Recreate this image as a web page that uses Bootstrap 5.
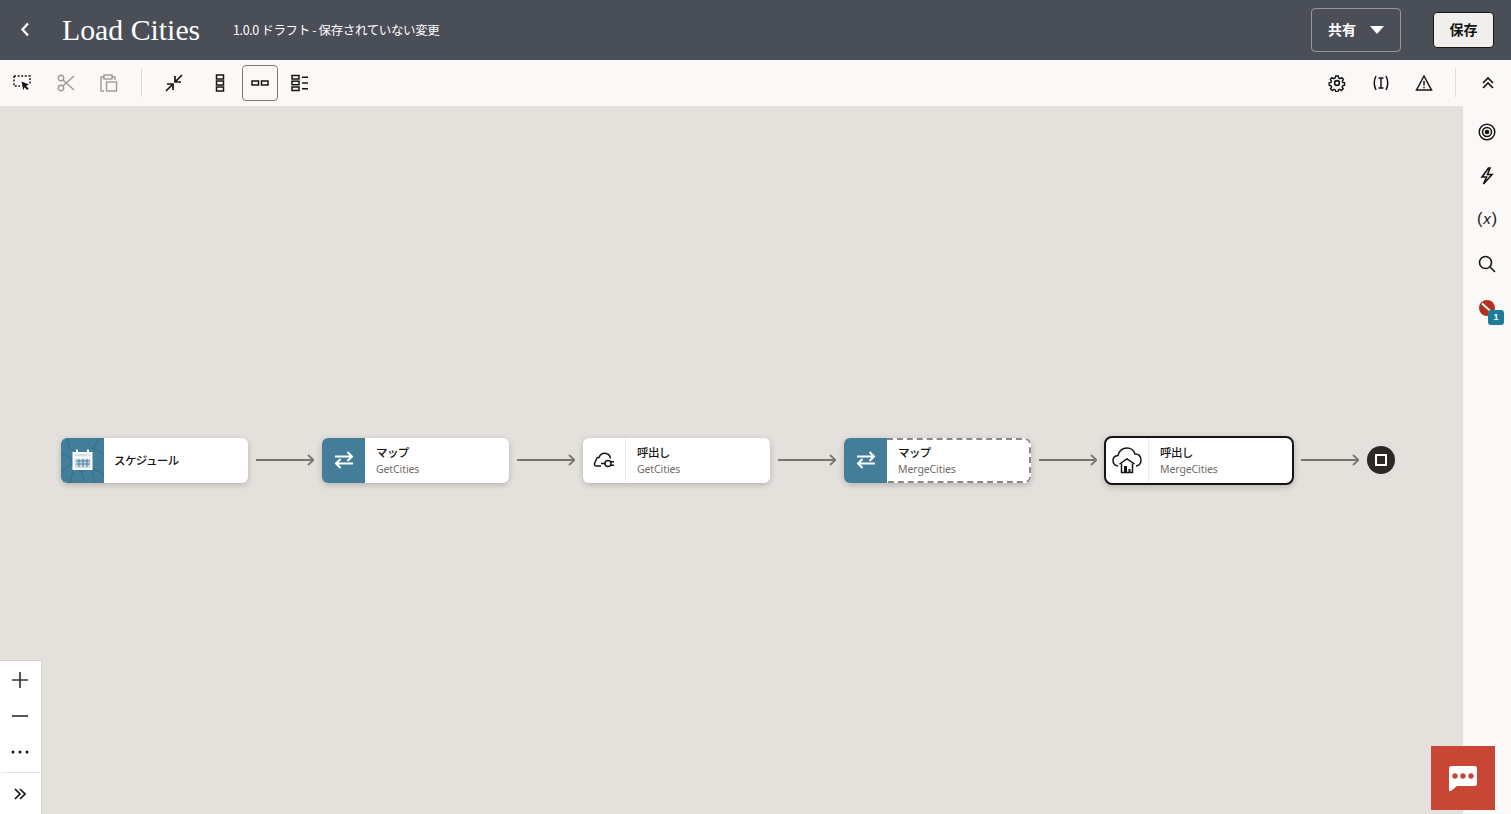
<!DOCTYPE html>
<html lang="ja">
<head>
<meta charset="utf-8">
<title>Load Cities</title>
<link href="https://cdn.jsdelivr.net/npm/bootstrap@5.3.0/dist/css/bootstrap.min.css" rel="stylesheet">
<style>
html,body{height:100%;overflow:hidden}
body{font-family:"Noto Sans CJK JP","Noto Sans",sans-serif;background:#e4e1dc;color:#161513}
.app-shell{height:814px;position:relative}
.head-bar{height:60px;background:#4a4e57;color:#fff;flex:none;padding:0 17px 0 0}
.back-btn{width:50px;height:60px;margin-right:12px;flex:none}
.page-title{font-family:"Liberation Serif",serif;font-size:29.8px;font-weight:400;line-height:1;margin:0 32px 0 0;width:139px;white-space:nowrap}
.page-sub{font-size:12.5px;letter-spacing:-.38px;line-height:1}
.share-btn{width:90px;height:44px;border:1px solid rgba(255,255,255,.42);border-radius:4px;color:#fff;font-size:14px;font-weight:700;background:transparent;margin-right:32px;padding:0 0 2px 16px;gap:14px}
.share-btn svg{margin-top:2px}
.share-btn:hover{color:#fff}
.save-btn{width:61px;height:36px;border:1px solid #161513;border-radius:4px;background:#f1efed;color:#161513;font-size:14px;font-weight:700;padding:0 0 2px}
.tool-bar{height:46px;background:#fbf9f8;flex:none;padding:0 5px 1px 4px}
.tool-btn{width:36px;height:36px;flex:none;border:1px solid transparent;border-radius:4px;background:none;padding:0}
.tool-btn.on{border-color:#7d7a76}
.tool-gap{gap:7.5px}
.tool-sep{width:1px;height:29px;background:#e0ddd8;margin:0 14px 0 14px;flex:none}
.tool-sep-r{margin:0 6.500px 0 5.500px}
.gap-wide{margin-right:6px}
.work-area{min-height:0}
.flow-canvas{background:#e4e1dc;padding-left:61px}
.flow-node{width:187px;height:45px;background:#fff;border-radius:6px;box-shadow:0 2px 6px rgba(0,0,0,.2);flex:none;overflow:hidden}
.node-pane{width:43px;flex:none;height:100%}
.pane-teal{background:#447d98}
.pane-plain{border-right:1px solid #eeece9}
.node-text{padding:1px 0 0 11px;line-height:1;min-width:0}
.node-solo{padding:0 0 0 10px}
.node-label{font-size:11.500px;font-weight:500;color:#161513;line-height:16px;letter-spacing:-.6px}
.node-sub{font-family:"Noto Sans",sans-serif;font-size:10.500px;color:#6f6b66;line-height:16px;letter-spacing:-.1px;margin-top:1px}
.node-dashed{flex:1;height:100%;border:2px dashed #8c8882;border-left:0;border-radius:0 6px 6px 0;padding:1px 0 0 11px}
.node-selected{width:190px;height:49px;border:2px solid #161513;border-radius:8px;margin:0 -1px}
.flow-arrow{width:58px;margin:0 8px;flex:none}
.flow-stop{width:28px;height:28px;border-radius:50%;background:#2b2825;flex:none}
.stop-mark{width:12px;height:12px;border:2px solid #fff}
.side-rail{width:48px;background:#fbf9f8;flex:none;padding-top:4px}
.rail-item{width:48px;height:44px;flex:none;position:relative}
.rail-var{font-family:"Liberation Sans",sans-serif;font-size:16px;line-height:1;color:#161513;padding-bottom:3px}
.rail-var i{font-size:15px;padding:0 1px}
.rail-badge{position:absolute;left:25px;top:24px;width:16px;height:15px;border-radius:3px;background:#1c7c99;color:#fff;font-size:9px;font-weight:700;font-family:"Liberation Sans",sans-serif;line-height:15px;text-align:center}
.zoom-panel{position:absolute;left:0;bottom:0;width:42px;height:154px;background:#fff;border:1px solid #d6d3ce;border-left:0;border-bottom:0;padding:1px 1px 0 0}
.zoom-item{height:36px;width:100%}
.zoom-sep{height:1px;background:#e6e4e0;margin:2px 0 0 1px}
.zoom-last{height:41px}
.chat-btn{position:absolute;left:1431px;top:746px;width:64px;height:64px;background:#c74634;border:0;border-radius:0;padding:0}
</style>
</head>
<body>
<div class="app-shell d-flex flex-column">
  <header class="head-bar d-flex align-items-center">
    <div class="back-btn d-flex align-items-center justify-content-center">
      <svg width="12" height="16" viewBox="0 0 12 16"><path d="M9 1.500 3.500 7.500 9 13.500" fill="none" stroke="#fff" stroke-width="2.400"/></svg>
    </div>
    <h1 class="page-title">Load Cities</h1>
    <span class="page-sub">1.0.0 ドラフト - 保存されていない変更</span>
    <div class="ms-auto d-flex align-items-center">
      <button class="btn share-btn d-flex align-items-center" type="button">共有
        <svg width="14" height="8" viewBox="0 0 14 8"><path d="M0 0h14L7 8z" fill="#fff"/></svg>
      </button>
      <button class="btn save-btn" type="button">保存</button>
    </div>
  </header>

  <nav class="tool-bar d-flex align-items-center">
    <div class="d-flex align-items-center tool-gap">
      <button class="tool-btn d-flex align-items-center justify-content-center" type="button" aria-label="select">
        <svg width="20" height="20" viewBox="0 0 20 20"><path d="M2 3h16v9M2 3v10h6" fill="none" stroke="#161513" stroke-width="1.400" stroke-dasharray="2 1.600"/><path d="M9.500 8.500l7.500 3-3 1.400 2.600 2.600-1.400 1.400-2.600-2.600-1.300 3z" fill="#161513"/></svg>
      </button>
      <button class="tool-btn d-flex align-items-center justify-content-center" type="button" aria-label="cut">
        <svg width="20" height="20" viewBox="0 0 20 20" fill="none" stroke="#9e9a95" stroke-width="1.400"><circle cx="5" cy="5" r="2.700"/><circle cx="5" cy="15" r="2.700"/><path d="M7 7l11 10M7 13 18 3"/></svg>
      </button>
      <button class="tool-btn d-flex align-items-center justify-content-center" type="button" aria-label="paste">
        <svg width="20" height="20" viewBox="0 0 20 20" fill="none" stroke="#9e9a95" stroke-width="1.400"><path d="M5 18H2V4h3M13 4h3v3"/><rect x="5" y="2" width="8" height="4"/><rect x="7.500" y="9" width="10" height="9"/></svg>
      </button>
    </div>
    <span class="tool-sep"></span>
    <div class="d-flex align-items-center gap-1">
      <button class="tool-btn gap-wide d-flex align-items-center justify-content-center" type="button" aria-label="collapse">
        <svg width="20" height="20" viewBox="0 0 20 20" fill="none" stroke="#161513" stroke-width="1.700"><path d="M18 2l-6.500 6.500M11 3v6h6M2 18l6.500-6.500M3 11h6v6"/></svg>
      </button>
      <button class="tool-btn d-flex align-items-center justify-content-center" type="button" aria-label="vertical">
        <svg width="10" height="20" viewBox="0 0 10 20" fill="none" stroke="#161513" stroke-width="1.500"><rect x="1.500" y="2" width="7" height="4"/><rect x="1.500" y="8" width="7" height="4"/><rect x="1.500" y="14" width="7" height="4"/></svg>
      </button>
      <button class="tool-btn on d-flex align-items-center justify-content-center" type="button" aria-label="horizontal">
        <svg width="18" height="8" viewBox="0 0 18 8" fill="none" stroke="#161513" stroke-width="1.500"><rect x="1" y="2" width="6.500" height="4"/><rect x="10.500" y="2" width="6.500" height="4"/></svg>
      </button>
      <button class="tool-btn d-flex align-items-center justify-content-center" type="button" aria-label="detail">
        <svg width="18" height="18" viewBox="0 0 18 18" fill="none" stroke="#161513" stroke-width="1.500"><rect x="1" y="1.500" width="7" height="3.500"/><rect x="1" y="7.200" width="7" height="3.500"/><rect x="1" y="13" width="7" height="3.500"/><path d="M11 3.200h6M11 9h6M11 14.800h6"/></svg>
      </button>
    </div>
    <div class="ms-auto d-flex align-items-center tool-gap">
      <button class="tool-btn d-flex align-items-center justify-content-center" type="button" aria-label="settings">
        <svg width="18" height="18" viewBox="0 0 18 18" fill="none" stroke="#161513" stroke-width="1.600"><circle cx="9" cy="9" r="2.400"/><path d="M7.600 1.200h2.800l.4 2.200 1.500.7 2-1.100 1.800 2-1.200 1.800.5 1.500 2 .6v2.600l-2.100.6-.6 1.500 1.200 1.800-1.900 1.900-1.900-1.200-1.500.6-.5 2.100H7.600l-.5-2.100-1.500-.6-1.900 1.200-1.900-1.900 1.200-1.800-.6-1.500-2.100-.6V8.900l2-.6.500-1.500L1.600 5l1.800-2 2 1.100 1.500-.7z" transform="translate(.9 .9) scale(.9)"/></svg>
      </button>
      <button class="tool-btn d-flex align-items-center justify-content-center" type="button" aria-label="variables">
        <svg width="20" height="18" viewBox="0 0 20 18" fill="none" stroke="#161513" stroke-width="1.500"><path d="M5 2Q1.500 9 5 16M15 2Q18.500 9 15 16M7.500 4h5M7.500 14h5M10 4v10"/></svg>
      </button>
      <button class="tool-btn d-flex align-items-center justify-content-center" type="button" aria-label="warnings">
        <svg width="18" height="18" viewBox="0 0 18 18" fill="none" stroke="#161513" stroke-width="1.500"><path d="M9 2 1.500 16h15z"/><path d="M9 7v4.500M9 12.700v1.600"/></svg>
      </button>
      <span class="tool-sep tool-sep-r"></span>
      <button class="tool-btn d-flex align-items-center justify-content-center" type="button" aria-label="collapse toolbar">
        <svg width="14" height="14" viewBox="0 0 14 14" fill="none" stroke="#161513" stroke-width="1.700"><path d="M2 7l5-5 5 5M2 12l5-5 5 5"/></svg>
      </button>
    </div>
  </nav>

  <div class="work-area d-flex flex-grow-1">
    <main class="flow-canvas flex-grow-1 d-flex align-items-center">
      <div class="flow-node d-flex align-items-center">
        <div class="node-pane pane-teal d-flex align-items-center justify-content-center">
          <svg width="43" height="45" viewBox="0 0 43 45"><path d="M0 33 11 26l9 8 11-4 12 7M9 45l3-12M20 34l5 11M31 30l3 15M0 16l9 3 3 7M38 0l-6 10 11 6M6 0l3 12" fill="none" stroke="#35708c" stroke-width="1.100"/><rect x="12.500" y="15" width="18" height="16" fill="#cfe0e8" stroke="#fff" stroke-width="2"/><path d="M12 19.500h19" stroke="#fff" stroke-width="2"/><path d="M16 11.500v5M27 11.500v5" stroke="#fff" stroke-width="2"/><path d="M15 23h14M15 26h14M18 21v8M22 21v8M26 21v8" stroke="#447d98" stroke-width="1"/></svg>
        </div>
        <div class="node-text node-solo"><div class="node-label">スケジュール</div></div>
      </div>
      <svg class="flow-arrow" height="12" viewBox="0 0 58 12" fill="none" stroke="#7a7570" stroke-width="1.800"><path d="M0 6h57M52 1l5.500 5-5.500 5"/></svg>

      <div class="flow-node d-flex align-items-center">
        <div class="node-pane pane-teal d-flex align-items-center justify-content-center">
          <svg width="20" height="18" viewBox="0 0 20 18" fill="none" stroke="#fff" stroke-width="2"><path d="M1 5.500h17M13.500 1 18 5.500 13.500 10M19 12.500H2M6.500 8 2 12.500 6.500 17"/></svg>
        </div>
        <div class="node-text"><div class="node-label">マップ</div><div class="node-sub">GetCities</div></div>
      </div>
      <svg class="flow-arrow" height="12" viewBox="0 0 58 12" fill="none" stroke="#7a7570" stroke-width="1.800"><path d="M0 6h57M52 1l5.500 5-5.500 5"/></svg>

      <div class="flow-node d-flex align-items-center">
        <div class="node-pane pane-plain d-flex align-items-center justify-content-center">
          <svg width="22" height="18" viewBox="0 0 22 18" fill="none" stroke="#161513" stroke-width="1.500"><path d="M8 15H3.500Q1 15 1.500 12.500L3.500 8Q4 6 6 6.500 8 1.500 13 2.500q4 .8 4.500 5"/><circle cx="15" cy="12.500" r="3"/><path d="M8 12.500h4M18 10.800h3M18 14.200h3"/></svg>
        </div>
        <div class="node-text"><div class="node-label">呼出し</div><div class="node-sub">GetCities</div></div>
      </div>
      <svg class="flow-arrow" height="12" viewBox="0 0 58 12" fill="none" stroke="#7a7570" stroke-width="1.800"><path d="M0 6h57M52 1l5.500 5-5.500 5"/></svg>

      <div class="flow-node d-flex align-items-center">
        <div class="node-pane pane-teal d-flex align-items-center justify-content-center">
          <svg width="20" height="18" viewBox="0 0 20 18" fill="none" stroke="#fff" stroke-width="2"><path d="M1 5.500h17M13.500 1 18 5.500 13.500 10M19 12.500H2M6.500 8 2 12.500 6.500 17"/></svg>
        </div>
        <div class="node-dashed d-flex flex-column justify-content-center"><div class="node-label">マップ</div><div class="node-sub">MergeCities</div></div>
      </div>
      <svg class="flow-arrow" height="12" viewBox="0 0 58 12" fill="none" stroke="#7a7570" stroke-width="1.800"><path d="M0 6h57M52 1l5.500 5-5.500 5"/></svg>

      <div class="flow-node node-selected d-flex align-items-center">
        <div class="node-pane pane-plain d-flex align-items-center justify-content-center">
          <svg width="30" height="28" viewBox="0 0 30 28" fill="none" stroke="#161513" stroke-width="1.500"><path d="M6 20Q1 19 1 14.500 1 10 6 9.500 8 2 15 2q6 0 8 6 6 0 6 6.500 0 4.500-5 5.500"/><path d="M7.500 18 15 13l7.500 5"/><path d="M9.500 17.500V26.500h11v-9"/><path d="M12 20h3v6h-3zM16.500 23h2v3h-2z" fill="#161513" stroke="none"/></svg>
        </div>
        <div class="node-text"><div class="node-label">呼出し</div><div class="node-sub">MergeCities</div></div>
      </div>
      <svg class="flow-arrow" height="12" viewBox="0 0 58 12" fill="none" stroke="#7a7570" stroke-width="1.800"><path d="M0 6h57M52 1l5.500 5-5.500 5"/></svg>

      <div class="flow-stop d-flex align-items-center justify-content-center"><span class="stop-mark"></span></div>
    </main>

    <aside class="side-rail d-flex flex-column">
      <div class="rail-item d-flex align-items-center justify-content-center">
        <svg width="18" height="18" viewBox="0 0 18 18" fill="none" stroke="#161513" stroke-width="1.500"><circle cx="9" cy="9" r="7.800"/><circle cx="9" cy="9" r="4.500"/><circle cx="9" cy="9" r="1.600" fill="#161513"/></svg>
      </div>
      <div class="rail-item d-flex align-items-center justify-content-center">
        <svg width="14" height="18" viewBox="0 0 14 18" fill="none" stroke="#161513" stroke-width="1.600"><path d="M8.500 1 2 10h4.500L3.500 17 12 7.500H7.500L10 1z"/></svg>
      </div>
      <div class="rail-item d-flex align-items-center justify-content-center">
        <span class="rail-var">(<i>x</i>)</span>
      </div>
      <div class="rail-item d-flex align-items-center justify-content-center">
        <svg width="18" height="18" viewBox="0 0 18 18" fill="none" stroke="#161513" stroke-width="1.600"><circle cx="7.500" cy="7.500" r="6"/><path d="M12 12l5 5"/></svg>
      </div>
      <div class="rail-item d-flex align-items-center justify-content-center">
        <svg width="18" height="18" viewBox="0 0 18 18"><circle cx="9" cy="9" r="8" fill="#b3311f"/><path d="M4 4.500l10 9" stroke="#fff" stroke-width="1.800"/></svg>
        <span class="rail-badge">1</span>
      </div>
    </aside>
  </div>

  <div class="zoom-panel d-flex flex-column">
    <div class="zoom-item d-flex align-items-center justify-content-center">
      <svg width="18" height="18" viewBox="0 0 18 18" stroke="#3a3733" stroke-width="1.700"><path d="M1 9h16M9 1v16"/></svg>
    </div>
    <div class="zoom-item d-flex align-items-center justify-content-center">
      <svg width="18" height="18" viewBox="0 0 18 18" stroke="#3a3733" stroke-width="1.700"><path d="M1 9h16"/></svg>
    </div>
    <div class="zoom-item d-flex align-items-center justify-content-center">
      <svg width="18" height="4" viewBox="0 0 18 4" fill="#161513"><circle cx="2" cy="2" r="1.500"/><circle cx="9" cy="2" r="1.500"/><circle cx="16" cy="2" r="1.500"/></svg>
    </div>
    <div class="zoom-sep"></div>
    <div class="zoom-last d-flex align-items-center justify-content-center">
      <svg width="14" height="14" viewBox="0 0 14 14" fill="none" stroke="#161513" stroke-width="1.700"><path d="M2 2l5 5-5 5M7 2l5 5-5 5"/></svg>
    </div>
  </div>

  <button class="chat-btn d-flex align-items-center justify-content-center" type="button" aria-label="chat">
    <svg width="28" height="25" viewBox="0 0 28 25"><path d="M2.500 0h23A2.500 2.500 0 0 1 28 2.500v15a2.500 2.500 0 0 1-2.500 2.500H8l-6 5H0V2.500A2.500 2.500 0 0 1 2.500 0z" fill="#fff"/><circle cx="6" cy="10" r="2.700" fill="#c74634"/><circle cx="14" cy="10" r="2.700" fill="#c74634"/><circle cx="22" cy="10" r="2.700" fill="#c74634"/></svg>
  </button>
</div>
<script src="https://cdn.jsdelivr.net/npm/bootstrap@5.3.0/dist/js/bootstrap.bundle.min.js"></script>
</body>
</html>
